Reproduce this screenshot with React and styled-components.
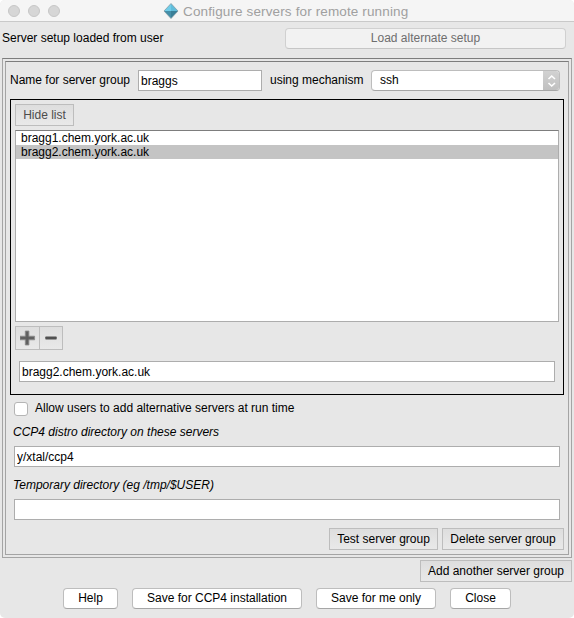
import React from "react";
import styled, { createGlobalStyle } from "styled-components";

const GlobalStyle = createGlobalStyle`
  * { box-sizing: border-box; }
  body { margin: 0; background: #fff; }
  button, input { font: inherit; color: inherit; margin: 0; outline: none; }
`;

const Window = styled.main`
  width: 574px;
  height: 618px;
  display: flex;
  flex-direction: column;
  overflow: hidden;
  background: #e7e7e7;
  border-radius: 5px;
  color: #000;
  font: 12px/14px "Liberation Sans", Arial, sans-serif;
  white-space: nowrap;
`;

const TitleBar = styled.header`
  flex: none;
  height: 22px;
  display: grid;
  grid-template-columns: 163px 1fr;
  background: #f5f5f5;
  border-bottom: 1px solid #c9c9c9;
`;

const Lights = styled.div`
  display: flex;
  gap: 8px;
  padding: 5px 0 0 8px;
`;

const Light = styled.span`
  width: 12px;
  height: 12px;
  border-radius: 50%;
  background: #d6d6d6;
  border: 1px solid #c6c6c6;
`;

const Title = styled.h1`
  margin: 0;
  display: flex;
  gap: 4px;
  color: #a0a0a0;
  font-size: 13.5px;
  font-weight: normal;
  line-height: 23px;
  letter-spacing: 0.13px;
  svg { margin-top: 3px; }
`;

const TopRow = styled.div`
  flex: none;
  height: 36px;
  padding: 6px 8px 0 2px;
  display: flex;
  justify-content: space-between;
`;

const Text = styled.span`
  display: block;
  font-style: ${(p) => (p.$italic ? "italic" : "normal")};
`;

const Status = styled(Text)`
  margin-top: 3px;
`;

const PushButton = styled.button`
  flex: none;
  width: ${(p) => p.$width}px;
  height: 21px;
  padding: 0 0 1px;
  border: 1px solid ${(p) => (p.$dim ? "#d0d0d0" : "#bdbdbd")};
  border-bottom-color: ${(p) => (p.$dim ? "#c6c6c6" : "#a6a6a6")};
  border-radius: 4px;
  background: ${(p) => (p.$dim ? "#f2f2f2" : "#fff")};
  color: ${(p) => (p.$dim ? "#6e6e6e" : "#000")};
`;

const SquareButton = styled.button`
  flex: none;
  width: ${(p) => p.$width}px;
  height: ${(p) => p.$height || 22}px;
  padding: 0;
  display: flex;
  align-items: center;
  justify-content: center;
  border: 1px solid #bdbdbd;
  background: linear-gradient(#dedede, #e9e9e9);
  color: ${(p) => (p.$dim ? "#4c4c4c" : "#000")};
`;

const OuterFrame = styled.section`
  flex: none;
  width: 570px;
  height: 500px;
  margin-left: 2px;
  padding: 2px;
  border: 1px solid #a4a4a4;
  border-top-color: #7d7d7d;
`;

const InnerFrame = styled.div`
  height: 494px;
  border: 1px solid #a4a4a4;
  border-top-color: #7d7d7d;
  padding: 8px 4px 0;
`;

const GroupRow = styled.div`
  height: 29px;
  display: grid;
  grid-template-columns: 128px 132px 101px 189px;
  align-items: start;
  ${Text} { margin-top: 3px; }
`;

const Field = styled.input`
  display: block;
  width: ${(p) => p.$width}px;
  height: 21px;
  padding: 1px 2px 0;
  border: 1px solid #adadad;
  border-radius: 0;
  background: #fff;
`;

const Select = styled.div`
  height: 21px;
  display: flex;
  justify-content: space-between;
  overflow: hidden;
  padding-left: 8px;
  background: #fff;
  border: 1px solid #bdbdbd;
  border-bottom-color: #a6a6a6;
  border-radius: 4px;
  ${Text} { margin-top: 2px; }
`;

const Stepper = styled.span`
  width: 17px;
  margin: -1px;
  background: linear-gradient(#d3d3d3, #bfbfbf);
  svg { display: block; margin: 4px 0 0 3px; }
`;

const ListFrame = styled.div`
  height: 296px;
  padding: 4px;
  border: 1px solid #000;
`;

const ServerList = styled.ul`
  height: 192px;
  margin: 4px 0;
  padding: 0;
  list-style: none;
  background: #fff;
  border: 1px solid #adadad;
  border-top-color: #7d7d7d;
`;

const ServerItem = styled.li`
  height: 14px;
  padding-left: 5px;
  background: ${(p) => (p.$selected ? "#c4c4c4" : "transparent")};
`;

const Tools = styled.div`
  display: flex;
  height: 35px;
  ${SquareButton} + ${SquareButton} { margin-left: -1px; }
`;

const EditRow = styled.div`
  padding-left: 4px;
`;

const Options = styled.div`
  padding-left: 4px;
  ${Field} { margin: 7px 0 11px; }
`;

const OptionLabel = styled(Text)`
  margin-left: -1px;
`;

const CheckLine = styled.label`
  height: 30px;
  padding-top: 7px;
  display: flex;
  gap: 7px;
  ${Text} { margin-top: -1px; }
`;

const CheckBox = styled.span`
  width: 14px;
  height: 14px;
  border: 1px solid #b5b5b5;
  border-radius: 3px;
  background: #fff;
`;

const GroupActions = styled.div`
  display: flex;
  justify-content: flex-end;
  margin-top: -3px;
  gap: 4px;
`;

const AddRow = styled.div`
  display: flex;
  justify-content: flex-end;
  padding: 2px 2px 6px 0;
`;

const Footer = styled.footer`
  display: flex;
  gap: 14px;
  padding-left: 63px;
`;

const Diamond = () => (
  <svg width="16" height="16" viewBox="0 0 16 16">
    <path d="M8 .5 1 8h7z" fill="#70cde9" />
    <path d="M8 .5 15 8H8z" fill="#60bddb" />
    <path d="M1 8h7v7.5z" fill="#458fa9" />
    <path d="M15 8H8v7.5z" fill="#397f98" />
    <path d="M8 .5 15 8l-7 7.5L1 8z" fill="none" stroke="#78939d" strokeWidth=".7" />
  </svg>
);

const Plus = () => (
  <svg width="16" height="16" viewBox="0 0 16 16">
    <path d="M5.3 1h3.6v5.2H14.6v3.6H8.9V15H5.3V9.8H-.2V6.2h5.5z" fill="#686868" stroke="#8a8a8a" strokeWidth=".8" strokeLinejoin="round" />
    <path d="M7.1 2v12M1 8h12.6" stroke="#5a5a5a" />
  </svg>
);

const Minus = () => (
  <svg width="12" height="4" viewBox="0 0 12 4">
    <rect x=".3" y=".6" width="11.4" height="2.8" rx=".6" fill="#505050" />
  </svg>
);

export default function App() {
  return (
    <>
      <GlobalStyle />
      <Window>
        <TitleBar>
          <Lights><Light /><Light /><Light /></Lights>
          <Title><Diamond />Configure servers for remote running</Title>
        </TitleBar>
        <TopRow>
          <Status>Server setup loaded from user</Status>
          <PushButton $width={281} $dim>Load alternate setup</PushButton>
        </TopRow>
        <OuterFrame>
          <InnerFrame>
            <GroupRow>
              <Text>Name for server group</Text>
              <Field $width={124} defaultValue="braggs" />
              <Text>using mechanism</Text>
              <Select>
                <Text>ssh</Text>
                <Stepper>
                  <svg width="12" height="14" viewBox="0 0 12 14" fill="none" stroke="#fff" strokeWidth="1.6">
                    <path d="m2.5 5 3.2-3L9 5M2.5 9l3.2 3L9 9" />
                  </svg>
                </Stepper>
              </Select>
            </GroupRow>
            <ListFrame>
              <SquareButton $width={59} $dim>Hide list</SquareButton>
              <ServerList>
                <ServerItem>bragg1.chem.york.ac.uk</ServerItem>
                <ServerItem $selected>bragg2.chem.york.ac.uk</ServerItem>
              </ServerList>
              <Tools>
                <SquareButton $width={25} $height={24} aria-label="Add server"><Plus /></SquareButton>
                <SquareButton $width={24} $height={24} aria-label="Remove server"><Minus /></SquareButton>
              </Tools>
              <EditRow><Field $width={536} defaultValue="bragg2.chem.york.ac.uk" /></EditRow>
            </ListFrame>
            <Options>
              <CheckLine><CheckBox /><Text>Allow users to add alternative servers at run time</Text></CheckLine>
              <OptionLabel $italic>CCP4 distro directory on these servers</OptionLabel>
              <Field $width={546} defaultValue="y/xtal/ccp4" />
              <OptionLabel $italic>Temporary directory (eg /tmp/$USER)</OptionLabel>
              <Field $width={546} />
            </Options>
            <GroupActions>
              <SquareButton $width={109}>Test server group</SquareButton>
              <SquareButton $width={122}>Delete server group</SquareButton>
            </GroupActions>
          </InnerFrame>
        </OuterFrame>
        <AddRow><SquareButton $width={152}>Add another server group</SquareButton></AddRow>
        <Footer>
          <PushButton $width={55}>Help</PushButton>
          <PushButton $width={170}>Save for CCP4 installation</PushButton>
          <PushButton $width={120}>Save for me only</PushButton>
          <PushButton $width={61}>Close</PushButton>
        </Footer>
      </Window>
    </>
  );
}
